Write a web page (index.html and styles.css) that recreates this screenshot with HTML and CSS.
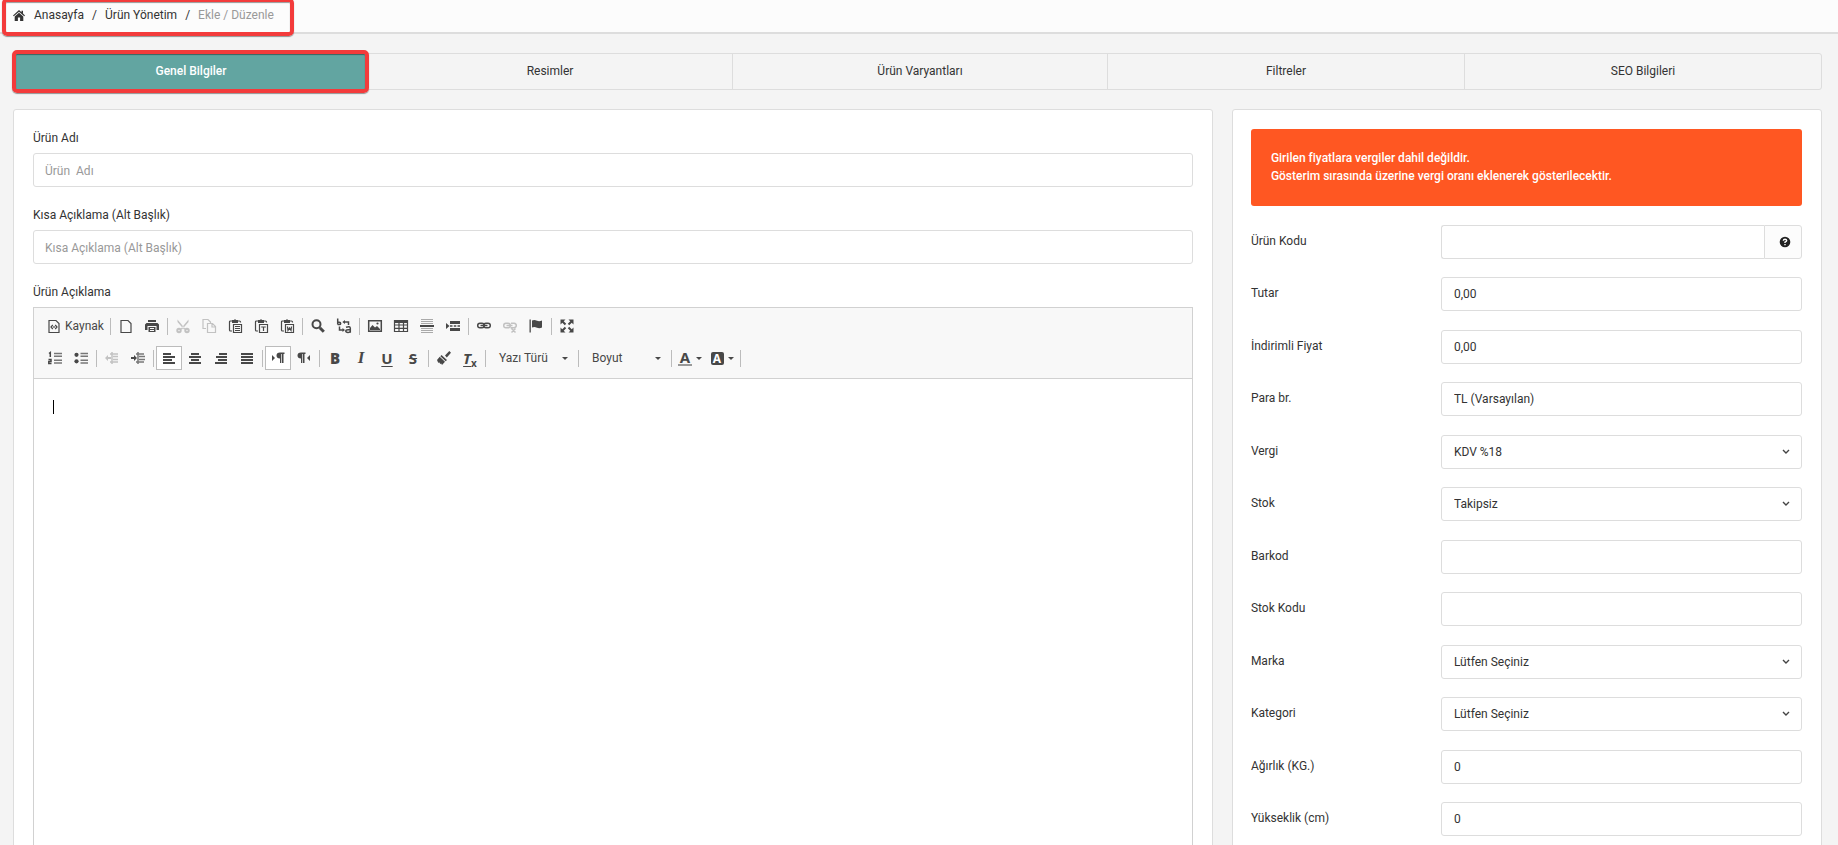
FILE: index.html
```html
<!DOCTYPE html>
<html lang="tr">
<head>
<meta charset="utf-8">
<title>Ürün Ekle / Düzenle</title>
<link rel="stylesheet" href="styles.css">
</head>
<body>
<header class="topbar">
  <nav class="breadcrumb" aria-label="Konum">
    <svg class="home" viewBox="0 0 12 11" aria-hidden="true"><path d="M6 0 0 5.400l.8.9L6 1.700l5.200 4.600.8-.9-2-1.800V.8H8.500v1.500z"/><path d="M6 2.700 1.700 6.500V11h3.200V7.500h2.200V11h3.200V6.500z"/></svg>
    <a href="#">Anasayfa</a><span>/</span><a href="#">Ürün Yönetim</a><span>/</span><span class="current">Ekle / Düzenle</span>
    <i class="marker marker-crumb"></i>
  </nav>
</header>

<main class="content">
  <nav class="tabs">
    <a class="tab active" href="#">Genel Bilgiler<i class="marker marker-tab"></i></a>
    <a class="tab" href="#">Resimler</a>
    <a class="tab" href="#">Ürün Varyantları</a>
    <a class="tab" href="#">Filtreler</a>
    <a class="tab" href="#">SEO Bilgileri</a>
  </nav>

  <form class="columns">
    <section class="card card-main">
      <div class="field">
        <label for="name">Ürün Adı</label>
        <input class="control" id="name" type="text" placeholder="Ürün&nbsp; Adı">
      </div>
      <div class="field">
        <label for="short">Kısa Açıklama (Alt Başlık)</label>
        <input class="control" id="short" type="text" placeholder="Kısa Açıklama (Alt Başlık)">
      </div>
      <div class="field">
        <label for="desc">Ürün Açıklama</label>
        <div class="editor">
          <div class="toolbar">
            <div class="tool-row">
              <button type="button" class="tool source"><svg viewBox="0 0 16 16"><path class="l" d="M3 2.500h7L13 5.500v9H3z"/><path class="l" d="M6.800 7 5 9l1.800 2M9.200 7 11 9l-1.800 2M8 8v2"/></svg>Kaynak</button>
              <i class="sep"></i>
              <button type="button" class="tool" aria-label="Yeni Sayfa"><svg viewBox="0 0 16 16"><path class="l" d="M3 2.500h7L13 5.500v9H3z"/></svg></button>
              <button type="button" class="tool" aria-label="Yazdır"><svg viewBox="0 0 16 16"><path d="M4 2h8v2H4zM2.500 5h11L15 6.500V12h-2.500V8h-9v4H1V6.500z"/><path d="M4.500 9h7v5h-7z"/><path class="cut" d="M6 10.500h4M6 12.500h4"/></svg></button>
              <i class="sep"></i>
              <button type="button" class="tool" disabled aria-label="Kes"><svg viewBox="0 0 16 16"><path d="M2.500 1.500 9.500 10l1.500 1-2 .5L2.500 4zM13.500 1.500 6.500 10l-1.500 1 2 .5L13.500 4z"/><circle class="l b" cx="4" cy="12.500" r="1.700"/><circle class="l b" cx="12" cy="12.500" r="1.700"/></svg></button>
              <button type="button" class="tool" disabled aria-label="Kopyala"><svg viewBox="0 0 16 16"><path class="l" d="M5 10.500H2v-9h5L9.500 4v1M6.500 5.500h5l3 3v6h-8zM11 6v3h3"/></svg></button>
              <button type="button" class="tool" aria-label="Yapıştır"><svg viewBox="0 0 16 16"><path class="l" d="M5 3H3.500Q2.500 3 2.500 4v8q0 1 1 1H5M11 3h1.500q1 0 1 1v.5M6.500 6.500h8v8h-8z"/><path d="M5 2h2L8 1l1 1h2v3H5z"/><path class="l" d="M8 8.500h5M8 10.500h5M8 12.500h5"/></svg></button>
              <button type="button" class="tool" aria-label="Düz Metin Olarak Yapıştır"><svg viewBox="0 0 16 16"><path class="l" d="M5 3H3.500Q2.500 3 2.500 4v8q0 1 1 1H5M11 3h1.500q1 0 1 1v.5M6.500 6.500h8v8h-8z"/><path d="M5 2h2L8 1l1 1h2v3H5z"/><path class="l" d="M8.200 9h4.600M10.500 9v4"/></svg></button>
              <button type="button" class="tool" aria-label="Word'den Yapıştır"><svg viewBox="0 0 16 16"><path class="l" d="M5 3H3.500Q2.500 3 2.500 4v8q0 1 1 1H5M11 3h1.500q1 0 1 1v.5M6.500 6.500h8v8h-8z"/><path d="M5 2h2L8 1l1 1h2v3H5z"/><path class="l" d="m8.500 8.500.5 4 1.500-2.500 1.500 2.500.5-4"/></svg></button>
              <i class="sep"></i>
              <button type="button" class="tool" aria-label="Bul"><svg viewBox="0 0 16 16"><circle class="l b" cx="6.500" cy="6.300" r="4"/><path class="l bb" d="m9.800 9.800 4 4"/></svg></button>
              <button type="button" class="tool" aria-label="Değiştir"><svg viewBox="0 0 16 16"><path class="l m" d="M1.700.5v6M1.700 4.300h1.500Q4.700 4.300 4.700 5.400T3.200 6.500H1.700M10 9.200q4.300-1.500 4.300 1v4.600M14 11.700h-2q-2.200 0-2.200 1.400t2.200 1.400 2-1.400M8 4h4.500v3M3.500 8.500V12H7"/><path d="M9 2v4L6.300 4zM6.500 10v4L9 12z"/></svg></button>
              <i class="sep"></i>
              <button type="button" class="tool" aria-label="Resim"><svg viewBox="0 0 16 16"><path class="l m" d="M1.700 2.700h12.600v10.600H1.700z"/><path d="m3 12 0-2 2.500-3L8 9.500 10 8l3 3v1z"/><circle cx="10.500" cy="5.500" r="1.100"/></svg></button>
              <button type="button" class="tool" aria-label="Tablo"><svg viewBox="0 0 16 16"><path class="l" d="M1.500 2.500h13v11h-13zM6 3v10.500M10.500 3v10.500M1.500 7h13M1.500 10.300h13"/><path d="M1 2h14v3H1z"/></svg></button>
              <button type="button" class="tool" aria-label="Yatay Çizgi"><svg viewBox="0 0 16 16"><path d="M1 7h14v2H1z"/><path class="l faint" d="M2 1.500h12M2 3.500h12M2 5.500h12M2 10.500h12M2 12.500h12M2 14.500h12"/></svg></button>
              <button type="button" class="tool" aria-label="Sayfa Sonu"><svg viewBox="0 0 16 16"><path d="M1 5v6l3.500-3zM5 3h10v3H5zM5 10h10v3H5zM5 7.200h2.500v1.600H5zM8.800 7.200h2.500v1.600H8.800zM12.500 7.200H15v1.600h-2.500z"/></svg></button>
              <i class="sep"></i>
              <button type="button" class="tool" aria-label="Bağlantı"><svg viewBox="0 0 16 16"><rect class="l m" x="1.700" y="5.200" width="6.600" height="4.600" rx="2.300"/><rect class="l m" x="7.700" y="5.200" width="6.600" height="4.600" rx="2.300"/><path class="l m" d="M4.500 7.500h7"/></svg></button>
              <button type="button" class="tool" disabled aria-label="Bağlantı Kaldır"><svg viewBox="0 0 16 16"><rect class="l m" x="1.700" y="5.200" width="6.600" height="4.600" rx="2.300"/><path class="l m" d="M9 5.200h3q2.300.3 2.300 2.300T12 9.800H8.500M4.500 7.500h6M9.500 10.500l4 4M13.500 10.500l-4 4"/></svg></button>
              <button type="button" class="tool" aria-label="Çapa"><svg viewBox="0 0 16 16"><path d="M1.500 1.500h1.300v13H1.500zM4 2.500q2.500-1 5 .3 2.300 1 5-.3v7q-2.500 1.300-5 .3-2.500-1.300-5-.3z"/></svg></button>
              <i class="sep"></i>
              <button type="button" class="tool" aria-label="Ekranı Kapla"><svg viewBox="0 0 16 16"><path d="M1.500 1.500h5l-5 5zM14.500 1.500v5l-5-5zM1.500 14.500v-5l5 5zM14.500 14.500h-5l5-5z"/><path class="l b" d="m3 3 3.500 3.500M13 3 9.500 6.500M3 13l3.500-3.500M13 13 9.500 9.500"/></svg></button>
            </div>
            <div class="tool-row">
              <button type="button" class="tool" aria-label="Numaralı Liste"><svg viewBox="0 0 16 16"><path class="l m" d="M2 3.500 3.300 2.500V7M1.500 9.500h2.500v2H1.800v2h2.700"/><path class="l m mid" d="M7 3.500h8M7 6.200h8M7 10.200h8M7 13h8"/></svg></button>
              <button type="button" class="tool" aria-label="Simge Listesi"><svg viewBox="0 0 16 16"><circle cx="3.500" cy="4.800" r="2.100"/><circle cx="3.500" cy="11.300" r="2.100"/><path class="l m mid" d="M7.500 3.500H15M7.500 6.200H15M7.500 10.200H15M7.500 13H15"/></svg></button>
              <i class="sep"></i>
              <button type="button" class="tool" disabled aria-label="Sekme Azalt"><svg viewBox="0 0 16 16"><path d="M1 8l3-3v2h3v2H4v2z"/><path class="l m" d="M8 2v12M6 4h8M9 6.500h5M9 9.500h5M6 12h8"/></svg></button>
              <button type="button" class="tool" aria-label="Sekme Arttır"><svg viewBox="0 0 16 16"><path d="M7 8 4 5v2H1v2h3v2z"/><path class="l m mid" d="M8 2v12M6 4h8M9 6.500h6M9 9.500h6M6 12h8"/></svg></button>
              <i class="sep"></i>
              <button type="button" class="tool on" aria-label="Sola Dayalı"><svg viewBox="0 0 16 16"><path d="M2 3h8v2H2zM2 6h12v2H2zM2 9h9v2H2zM2 12h12v2H2z"/></svg></button>
              <button type="button" class="tool" aria-label="Ortalanmış"><svg viewBox="0 0 16 16"><path d="M4 3h8v2H4zM2 6h12v2H2zM4 9h8v2H4zM2 12h12v2H2z"/></svg></button>
              <button type="button" class="tool" aria-label="Sağa Dayalı"><svg viewBox="0 0 16 16"><path d="M6 3h8v2H6zM3 6h11v2H3zM5 9h9v2H5zM2 12h12v2H2z"/></svg></button>
              <button type="button" class="tool" aria-label="İki Kenara Yaslanmış"><svg viewBox="0 0 16 16"><path d="M2 3h12v2H2zM2 6h12v2H2zM2 9h12v2H2zM2 12h12v2H2z"/></svg></button>
              <i class="sep"></i>
              <button type="button" class="tool on" aria-label="Soldan Sağa"><svg viewBox="0 0 16 16"><path d="M2 5v6l3-3zM10 13V8.500q-3.500 0-3.500-3T10 2.500h4.500V4H13.500v9H12V4h-.7v9z"/></svg></button>
              <button type="button" class="tool" aria-label="Sağdan Sola"><svg viewBox="0 0 16 16"><path d="M14 5v6l-3-3zM5 13V8.500q-3.500 0-3.500-3T5 2.500h4.500V4H8.500v9H7V4h-.7v9z"/></svg></button>
              <i class="sep"></i>
              <button type="button" class="tool glyph" aria-label="Kalın"><b>B</b></button>
              <button type="button" class="tool glyph" aria-label="İtalik"><em>I</em></button>
              <button type="button" class="tool glyph" aria-label="Altı Çizgili"><u>U</u></button>
              <button type="button" class="tool glyph" aria-label="Üstü Çizgili"><s>S</s></button>
              <i class="sep"></i>
              <button type="button" class="tool" aria-label="Biçimi Kopyala"><svg viewBox="0 0 16 16"><path d="M13.300 1 15 2.700 10.800 7.500 9 5.500zM5.500 5l5.500 5-1.300 1.300L4.300 6.200zM3.700 6.800l5.300 5-3 3.200-.8-1.500-1 .5-.7-1.500-1.300.3L1 10z"/></svg></button>
              <button type="button" class="tool glyph" aria-label="Biçimi Kaldır"><u><i>T</i></u><small>x</small></button>
              <i class="sep"></i>
              <button type="button" class="tool combo">Yazı Türü<i class="arrow"></i></button>
              <i class="sep"></i>
              <button type="button" class="tool combo">Boyut<i class="arrow"></i></button>
              <i class="sep"></i>
              <button type="button" class="tool color glyph" aria-label="Yazı Renk"><span class="ink">A</span><i class="arrow"></i></button>
              <button type="button" class="tool color glyph" aria-label="Arka Renk"><span class="fill">A</span><i class="arrow"></i></button>
              <i class="sep"></i>
            </div>
          </div>
          <div class="edit-area">
            <textarea id="desc"></textarea>
            <i class="caret"></i>
          </div>
        </div>
      </div>
    </section>

    <section class="card card-side">
      <p class="alert">Girilen fiyatlara vergiler dahil değildir.<br>Gösterim sırasında üzerine vergi oranı eklenerek gösterilecektir.</p>
      <div class="rows">
        <div class="row"><label for="code">Ürün Kodu</label><div class="group"><input class="control" id="code" type="text"><button type="button" class="addon" aria-label="Yardım"><svg viewBox="0 0 12 12"><circle cx="6" cy="6" r="5.300"/><path class="q" d="M4.300 4.700Q4.400 3.200 6 3.200t1.700 1.300Q7.700 5.300 6 6.200V7M6 8v1.300"/></svg></button></div></div>
        <div class="row"><label for="price">Tutar</label><input class="control" id="price" type="text" value="0,00"></div>
        <div class="row"><label for="sale">İndirimli Fiyat</label><input class="control" id="sale" type="text" value="0,00"></div>
        <div class="row"><label for="cur">Para br.</label><select class="control" id="cur"><option>TL (Varsayılan)</option></select></div>
        <div class="row"><label for="tax">Vergi</label><div class="pick"><select class="control" id="tax"><option>KDV %18</option></select><svg viewBox="0 0 8 6"><path d="m1 1 3 3 3-3"/></svg></div></div>
        <div class="row"><label for="stock">Stok</label><div class="pick"><select class="control" id="stock"><option>Takipsiz</option></select><svg viewBox="0 0 8 6"><path d="m1 1 3 3 3-3"/></svg></div></div>
        <div class="row"><label for="barcode">Barkod</label><input class="control" id="barcode" type="text"></div>
        <div class="row"><label for="sku">Stok Kodu</label><input class="control" id="sku" type="text"></div>
        <div class="row"><label for="brand">Marka</label><div class="pick"><select class="control" id="brand"><option>Lütfen Seçiniz</option></select><svg viewBox="0 0 8 6"><path d="m1 1 3 3 3-3"/></svg></div></div>
        <div class="row"><label for="cat">Kategori</label><div class="pick"><select class="control" id="cat"><option>Lütfen Seçiniz</option></select><svg viewBox="0 0 8 6"><path d="m1 1 3 3 3-3"/></svg></div></div>
        <div class="row"><label for="weight">Ağırlık (KG.)</label><input class="control" id="weight" type="text" value="0"></div>
        <div class="row"><label for="height">Yükseklik (cm)</label><input class="control" id="height" type="text" value="0"></div>
      </div>
    </section>
  </form>
</main>
</body>
</html>
```

FILE: styles.css
```css
* { box-sizing: border-box; }

body {
  margin: 0;
  height: 100vh;
  display: flex;
  flex-direction: column;
  overflow: hidden;
  background: #f4f4f4;
  color: #333;
  font: 12px/18px Roboto, sans-serif;
}

a { color: inherit; text-decoration: none; }
button, input, select, textarea { font: inherit; color: inherit; }

/* Top bar */
.topbar {
  flex: none;
  background: #fcfcfc;
  border-bottom: 2px solid #ddd;
}
.breadcrumb {
  position: relative;
  display: flex;
  align-items: center;
  width: max-content;
  gap: 8px;
  padding: 6px 12px 8px 13px;
}
.home { width: 12px; height: 11px; margin-right: 1px; fill: #333; }
.current { color: #999; }

/* Red highlight frames laid over the page */
.marker {
  position: absolute;
  z-index: 2;
  border: 4px solid #f33b3b;
  border-radius: 5px;
  box-shadow: 0 1px 1px #0006, inset 0 1px 1px #0006;
}
.marker-crumb { inset: -2px -8px -4px 2px; }
.marker-tab { inset: -4px -1px -4px -2px; }

/* Page */
.content {
  flex: 1;
  min-height: 0;
  padding: 19px 16px 0 13px;
  display: flex;
  flex-direction: column;
  gap: 19px;
}
.tabs {
  flex: none;
  display: grid;
  grid-template-columns: 354fr 364fr 375fr 357fr 357fr;
  border: 1px solid #ddd;
  border-radius: 3px;
}
.tab {
  position: relative;
  padding: 8px 12px 9px;
  text-align: center;
  border-left: 1px solid #ddd;
}
.tab.active {
  background: #62a5a1;
  color: #fff;
  font-weight: 500;
  border-left: 0;
}
.tab.active + .tab { border-left: 0; }

.columns {
  display: grid;
  grid-template-columns: 61fr 30fr;
  gap: 19px;
  align-items: start;
}
.card {
  min-width: 0;
  background: #fff;
  border: 1px solid #ddd;
  border-radius: 3px;
  padding: 19px;
}

/* Fields */
.card-main { display: flex; flex-direction: column; gap: 19px; }
.field { display: flex; flex-direction: column; }
.field label { padding-bottom: 6px; }
.control {
  width: 100%;
  min-width: 0;
  height: 34px;
  margin: 0;
  padding: 0 12px;
  background: #fff;
  border: 1px solid #ddd;
  border-radius: 3px;
  appearance: none;
}
.field .control { padding: 1px 11px 0; }
.control::placeholder { color: #999; opacity: 1; }

/* Rich text editor */
.editor { border: 1px solid #d1d1d1; }
.toolbar {
  display: flex;
  flex-direction: column;
  gap: 8px;
  padding: 6px 8px 8px;
  background: #f8f8f8;
  border-bottom: 1px solid #d1d1d1;
}
.tool-row { display: flex; align-items: center; height: 24px; }
.tool {
  flex: none;
  display: flex;
  align-items: center;
  justify-content: center;
  width: 26px;
  height: 24px;
  padding: 0;
  border: 0;
  background: none;
  color: #484848;
}
.tool svg { width: 16px; height: 16px; fill: #484848; }
.tool .l { fill: none; stroke: #484848; stroke-width: 1.2; }
.tool .m { stroke-width: 1.5; }
.tool .b { stroke-width: 2; }
.tool .bb { stroke-width: 3; }
.tool .mid { stroke: #777; }
.tool .faint { stroke: #aaa; }
.tool .cut { fill: none; stroke: #f8f8f8; }
.tool:disabled svg { opacity: .3; }
.tool.on { background: #fff; border: 1px solid #bcbcbc; }
.tool.source { width: 66px; gap: 3px; }
.sep { flex: none; width: 1px; height: 17px; margin: 0 2px; background: #bcbcbc; }
.glyph { font: 700 15px/16px "Noto Sans", sans-serif; }
.glyph em { font: italic 700 17px/16px "Liberation Serif", serif; }
.glyph u { text-underline-offset: 2px; }
.glyph small { font-size: 10px; align-self: flex-end; line-height: 14px; }
.combo { width: 88px; padding: 0 8px 0 11px; justify-content: space-between; }
.arrow {
  border: 3px solid transparent;
  border-top-color: #484848;
  border-bottom: 0;
}
.color { width: 32px; gap: 4px; }
.ink { width: 14px; line-height: 13px; border-bottom: 2px solid #999; }
.fill {
  width: 13px;
  border-radius: 2px;
  background: #484848;
  color: #fff;
  font-size: 12px;
  line-height: 13px;
}
.edit-area { position: relative; }
.edit-area textarea {
  display: block;
  width: 100%;
  height: 600px;
  padding: 20px;
  border: 0;
  outline: 0;
  resize: none;
}
.caret { position: absolute; top: 21px; left: 19px; width: 1px; height: 14px; background: #000; }

/* Pricing and stock column */
.card-side { padding: 19px 19px 19px 18px; }
.alert {
  margin: 0 0 19px;
  padding: 20px 20px 21px;
  background: #ff5722;
  border-radius: 3px;
  color: #fff;
  font-weight: 500;
}
.rows { display: grid; grid-auto-rows: 52px 53px; }
.row {
  display: grid;
  grid-template-columns: 190fr 361fr;
  align-items: start;
}
.row label { padding-top: 7px; }
.group { display: flex; }
.group .control { border-radius: 3px 0 0 3px; border-right: 0; }
.addon {
  flex: none;
  display: grid;
  place-items: center;
  width: 38px;
  padding: 0 0 0 3px;
  background: #fcfcfc;
  border: 1px solid #ddd;
  border-radius: 0 3px 3px 0;
}
.addon svg { width: 12px; height: 12px; fill: #222; }
.addon .q { fill: none; stroke: #fff; stroke-width: 1.4; }
.pick { display: grid; align-items: center; }
.pick > * { grid-area: 1 / 1; }
.pick svg {
  justify-self: end;
  width: 8px;
  height: 6px;
  margin-right: 12px;
  fill: none;
  stroke: #444;
  stroke-width: 1.4;
  pointer-events: none;
}
```
